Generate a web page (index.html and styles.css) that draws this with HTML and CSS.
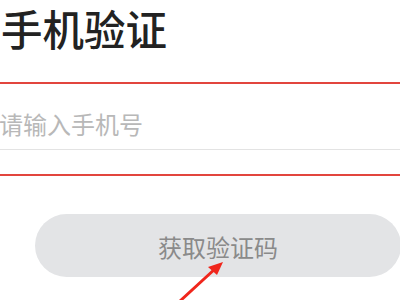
FILE: index.html
```html
<!DOCTYPE html>
<html lang="zh">
<head>
<meta charset="utf-8">
<link rel="stylesheet" href="styles.css">
</head>
<body>
<div class="page">
  <h1 class="title">手机验证</h1>
  <div class="field-box">
    <div class="field">
      <span class="placeholder">请输入手机号</span>
    </div>
  </div>
  <button class="code-btn">获取验证码</button>
</div>
<svg class="arrow" width="400" height="300" viewBox="0 0 400 300">
  <line x1="180" y1="301" x2="216" y2="268" stroke="#f0261c" stroke-width="3" stroke-linecap="round"/>
  <polygon points="223,262 208,267 217,275" fill="#f0261c"/>
</svg>
</body>
</html>
```

FILE: styles.css
```css
html, body {
  margin: 0;
  padding: 0;
  background: #ffffff;
  width: 400px;
  height: 300px;
  overflow: hidden;
}
.page {
  font-family: "Noto Sans CJK SC", "Noto Sans", sans-serif;
  display: flex;
  flex-direction: column;
}
.title {
  margin: 0;
  padding: 2px 0 0 1px;
  font-size: 41.5px;
  line-height: 52px;
  font-weight: 500;
  color: #222222;
}
.field-box {
  margin-top: 28px;
  border-top: 2px solid #e2453e;
  border-bottom: 2px solid #e2453e;
  height: 90px;
  box-sizing: content-box;
}
.field {
  height: 65px;
  border-bottom: 1px solid #e3e3e3;
  display: flex;
  align-items: flex-end;
}
.placeholder {
  font-size: 24px;
  line-height: 34px;
  margin-bottom: 8px;
  color: #b8b8b8;
  margin-left: -1px;
}
.code-btn {
  margin: 38px 0 0 35px;
  width: 366px;
  height: 63px;
  border: none;
  border-radius: 32px;
  background: #e3e4e6;
  color: #8a8a8a;
  font-family: "Noto Sans CJK SC", "Noto Sans", sans-serif;
  font-size: 24px;
  padding: 0;
  padding-top: 2px;
  flex: none;
}
.arrow {
  position: absolute;
  left: 0;
  top: 0;
  pointer-events: none;
}
```
